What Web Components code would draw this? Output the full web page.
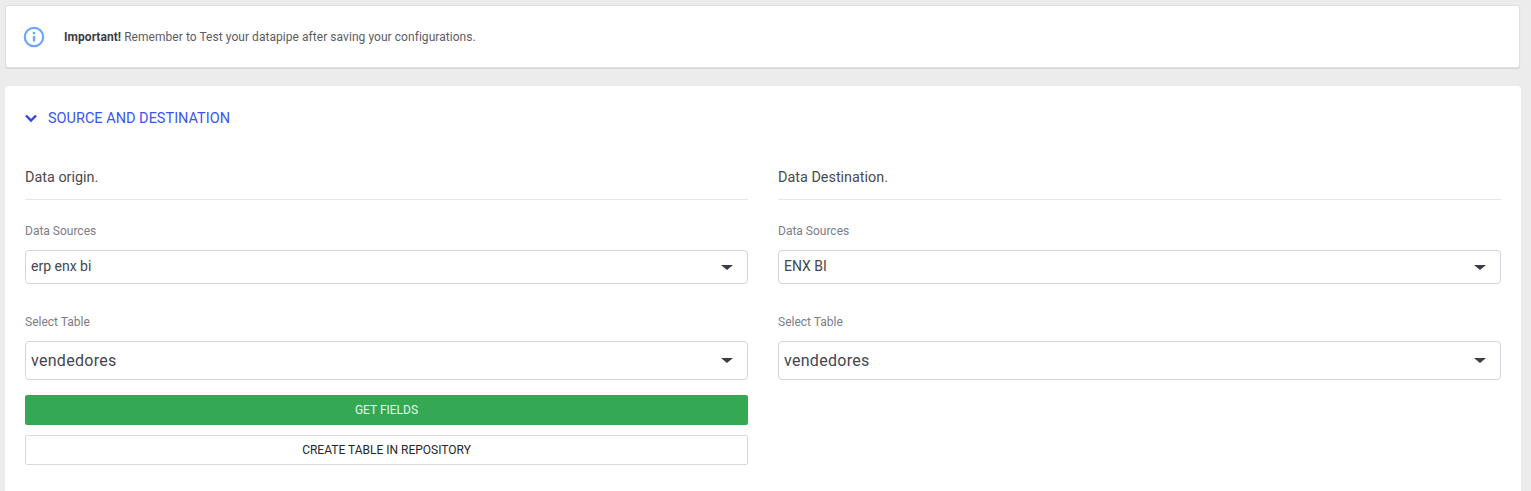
<!DOCTYPE html>
<html>
<head>
<meta charset="utf-8">
<title>Datapipe</title>
<style>
  html, body { margin: 0; height: 491px; overflow: hidden; background: #ececec; }
  body { font-family: Roboto, "Liberation Sans", sans-serif; color: #3f4254; padding: 5px 10px 0 5px; box-sizing: border-box; }
</style>
</head>
<body>
<alert-box><b>Important!</b> Remember to Test your datapipe after saving your configurations.</alert-box>
<fold-card heading="SOURCE AND DESTINATION">
  <data-col heading="Data origin.">
    <pick-field label="Data Sources" value="erp enx bi" size="small"></pick-field>
    <pick-field label="Select Table" value="vendedores" size="large"></pick-field>
    <act-button kind="green">GET FIELDS</act-button>
    <act-button kind="plain">CREATE TABLE IN REPOSITORY</act-button>
  </data-col>
  <data-col heading="Data Destination.">
    <pick-field label="Data Sources" value="ENX BI" size="small"></pick-field>
    <pick-field label="Select Table" value="vendedores" size="large"></pick-field>
  </data-col>
</fold-card>
<script>
class AlertBox extends HTMLElement{
  constructor(){
    super()
    this.attachShadow({mode: "open"}).innerHTML = `
    <style>
      :host{ display:flex; align-items:center; height:61px; box-sizing:border-box; margin:1px 2px 0 1px; padding:0 17px; background:#fff;
        border-radius:2px; box-shadow:0 0 0 1px #e0e0e0, 0 1px 1px 1px #d4d4d4; font-size:12px; letter-spacing:.05px; color:#5c5c66; }
      svg{ width:22px; height:22px; margin-right:19px; flex:none; }
      ::slotted(b){ color:#3c3c44; }
    </style>
    <svg viewBox="0 0 22 22" fill="none" stroke="#6ea6f7">
      <circle cx="11" cy="11" r="9.2" stroke-width="2.2"/>
      <path d="M11 10v5.5" stroke-width="2.4"/>
      <path d="M11 6v2.2" stroke-width="2.4"/>
    </svg>
    <div><slot></slot></div>`
  }
}
class FoldCard extends HTMLElement{
  constructor(){
    super()
    this.attachShadow({mode: "open"}).innerHTML = `
    <style>
      :host{ display:block; margin-top:19px; background:#fff; border-radius:4px; height:420px; box-sizing:border-box; padding:0 20px; }
      .head{ display:flex; align-items:center; height:63px; box-sizing:border-box; padding-top:1px; color:#3a55f0; font-size:14.5px; }
      svg{ width:14px; height:14px; margin-right:10px; margin-left:-1px; }
      .cols{ display:grid; grid-template-columns:723px 723px; column-gap:30px; }
    </style>
    <div class="head">
      <svg viewBox="0 0 14 14" fill="none" stroke="#2f45e8" stroke-width="2.4"><path d="M2 4.5l5 5 5-5"/></svg>
      <span>${this.getAttribute("heading")}</span>
    </div>
    <div class="cols"><slot></slot></div>`
  }
}
class DataCol extends HTMLElement{
  constructor(){
    super()
    this.attachShadow({mode: "open"}).innerHTML = `
    <style>
      :host{ display:block; }
      .title{ height:51px; box-sizing:border-box; font-size:14.4px; color:#4a4a52; border-bottom:1px solid #e6e6e9; line-height:57px; }
    </style>
    <div class="title">${this.getAttribute("heading")}</div>
    <slot></slot>`
  }
}
class PickField extends HTMLElement{
  constructor(){
    super()
    const large = this.getAttribute("size") == "large"
    this.attachShadow({mode: "open"}).innerHTML = `
    <style>
      :host{ display:block; margin-bottom:${large ? 15 : 0}px; }
      label{ display:block; font-size:12px; color:#7a7d88; line-height:16px; padding:${large ? 30 : 23}px 0 11px; }
      .box{ display:flex; align-items:center; justify-content:space-between; height:${large ? 39 : 34}px; box-sizing:border-box;
        border:1px solid #d3d5dc; border-radius:4px; padding:0 14px ${large ? 0 : 2}px 5px; font-size:${large ? 16 : 14}px; color:#444652;
        letter-spacing:${large ? .3 : 0}px; }
      i{ width:0; height:0; margin-top:${large ? 0 : 2}px; border-left:6px solid transparent; border-right:6px solid transparent; border-top:5px solid #3a3c48; }
    </style>
    <label>${this.getAttribute("label")}</label>
    <div class="box"><span>${this.getAttribute("value")}</span><i></i></div>`
  }
}
class ActButton extends HTMLElement{
  constructor(){
    super()
    const green = this.getAttribute("kind") == "green"
    this.attachShadow({mode: "open"}).innerHTML = `
    <style>
      :host{ display:flex; align-items:center; justify-content:center; height:30px; box-sizing:border-box; border-radius:2px; font-size:12px;
        margin-bottom:10px; background:${green ? "#34a853" : "#fff"}; color:${green ? "#e6f5ea" : "#26262c"};
        border:${green ? "0" : "1px solid #d9dadd"}; }
    </style>
    <slot></slot>`
  }
}
customElements.define("alert-box", AlertBox)
customElements.define("fold-card", FoldCard)
customElements.define("data-col", DataCol)
customElements.define("pick-field", PickField)
customElements.define("act-button", ActButton)
</script>
</body>
</html>
